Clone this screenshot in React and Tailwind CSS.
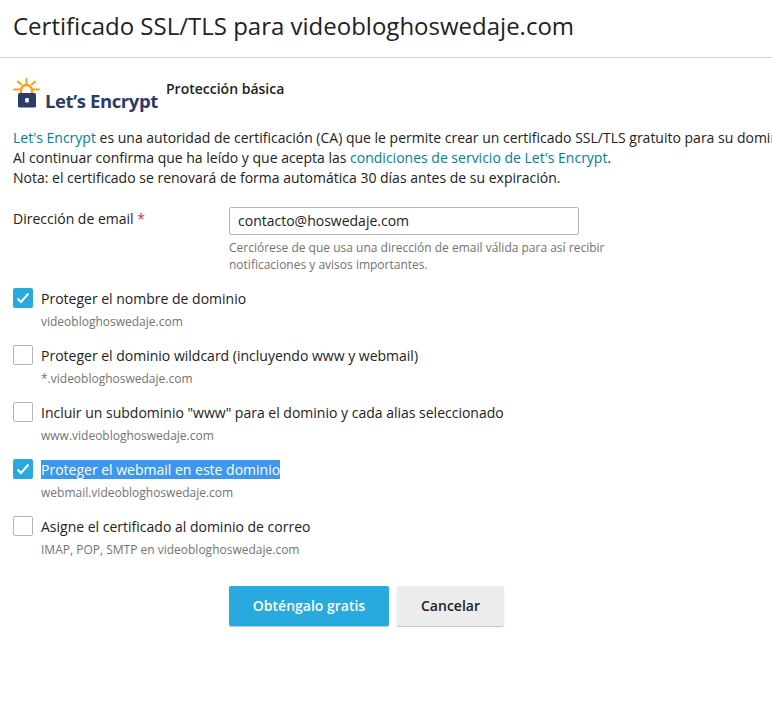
const options = [
    { label: "Proteger el nombre de dominio", hint: "videobloghoswedaje.com", checked: true },
    { label: "Proteger el dominio wildcard (incluyendo www y webmail)", hint: "*.videobloghoswedaje.com" },
    { label: 'Incluir un subdominio "www" para el dominio y cada alias seleccionado', hint: "www.videobloghoswedaje.com" },
    { label: "Proteger el webmail en este dominio", hint: "webmail.videobloghoswedaje.com", checked: true, selected: true },
    { label: "Asigne el certificado al dominio de correo", hint: "IMAP, POP, SMTP en videobloghoswedaje.com" },
];

function Logo() {
    return (
        <div className="flex items-start w-[153px] h-[36px] shrink-0">
            <svg width="28" height="30" viewBox="0 0 28 30" className="shrink-0">
                <g stroke="#f9a11b" strokeWidth="2" strokeLinecap="round" fill="none">
                    <path d="M13.5 1v5" />
                    <path d="M5 3.5l3.2 3" />
                    <path d="M22 3.5l-3.2 3" />
                    <path d="M1 11.5h5.5" />
                    <path d="M20.5 11.5h5.5" />
                    <path d="M8 16v-3.5a5.5 5.5 0 0 1 11 0v3.5" strokeWidth="2.4" strokeLinecap="butt" />
                </g>
                <rect x="5" y="15" width="18" height="14.5" rx="1.5" fill="#2c3c69" />
                <rect x="12.2" y="20" width="3.6" height="4.5" rx="1" fill="#fff" />
            </svg>
            <span className="font-['Open_Sans',sans-serif] font-bold text-[18.5px] leading-[22px] text-[#2c3c69] tracking-[-0.4px] ml-[4px] mt-[12px] whitespace-nowrap">
                Let’s Encrypt
            </span>
        </div>
    );
}

function CheckRow({ label, hint, checked, selected }) {
    return (
        <div className="h-[57px]">
            <div className="flex items-center gap-2 h-[20px]">
                {checked ? (
                    <span className="w-5 h-5 rounded-[2px] bg-[#28aade] flex items-center justify-center shrink-0">
                        <svg width="14" height="12" viewBox="0 0 14 12" fill="none">
                            <path d="M1.5 6.5l3.5 3.5 7.5-8.5" stroke="#fff" strokeWidth="2" />
                        </svg>
                    </span>
                ) : (
                    <span className="w-5 h-5 rounded-[2px] bg-white border border-[#b5b5b5] shrink-0" />
                )}
                <span className={`text-sm leading-[19px] whitespace-nowrap ${selected ? "bg-[#3d97ed] text-white" : "text-[#222]"}`}>
                    {label}
                </span>
            </div>
            <p className="text-xs leading-[16px] text-[#737373] ml-[28px] mt-[6px] whitespace-nowrap">{hint}</p>
        </div>
    );
}

export default function App() {
    return (
        <div className="w-[772px] h-[712px] overflow-hidden bg-white font-['Open_Sans',sans-serif] text-[#222]">
            <h1 className="text-2xl leading-[30px] px-[13px] pt-[11px] pb-[16px] border-b border-[#d1d1d1] whitespace-nowrap">
                Certificado SSL/TLS para videobloghoswedaje.com
            </h1>

            <div className="pl-[13px]">
                <div className="flex items-start mt-[20px]">
                    <Logo />
                    <span className="text-sm leading-[20px] font-semibold mt-[1px]">Protección básica</span>
                </div>

                <div className="text-sm leading-[20px] mt-[14px] whitespace-nowrap">
                    <p><span className="text-[#007e9e]">Let's Encrypt</span> es una autoridad de certificación (CA) que le permite crear un certificado SSL/TLS gratuito para su dominio.</p>
                    <p>Al continuar confirma que ha leído y que acepta las <span className="text-[#007e9e]">condiciones de servicio de Let's Encrypt</span>.</p>
                    <p>Nota: el certificado se renovará de forma automática 30 días antes de su expiración.</p>
                </div>

                <div className="flex mt-[19px]">
                    <div className="w-[216px] text-sm leading-[20px] pt-[2px]">
                        Dirección de email <span className="text-[#d02d5c]">*</span>
                    </div>
                    <div>
                        <div className="w-[350px] h-[28px] border border-[#b5b5b5] rounded-[2px] px-2 text-sm leading-[26px]">
                            contacto@hoswedaje.com
                        </div>
                        <p className="text-xs leading-[17px] text-[#737373] mt-[4px] w-[400px]">
                            Cerciórese de que usa una dirección de email válida para así recibir notificaciones y avisos importantes.
                        </p>
                    </div>
                </div>

                <div className="mt-[15px]">
                    {options.map((option) => (
                        <CheckRow key={option.label} {...option} />
                    ))}
                </div>

                <div className="flex gap-2 ml-[216px] mt-[13px]">
                    <button className="w-[160px] h-10 rounded-[2px] bg-[#28aade] text-white text-sm font-semibold shadow-[0_1px_1px_rgba(0,0,0,0.25)]">
                        Obténgalo gratis
                    </button>
                    <button className="w-[107px] h-10 rounded-[2px] bg-[#ececec] text-[#222] text-sm font-semibold shadow-[0_1px_1px_rgba(0,0,0,0.25)]">
                        Cancelar
                    </button>
                </div>
            </div>
        </div>
    );
}
